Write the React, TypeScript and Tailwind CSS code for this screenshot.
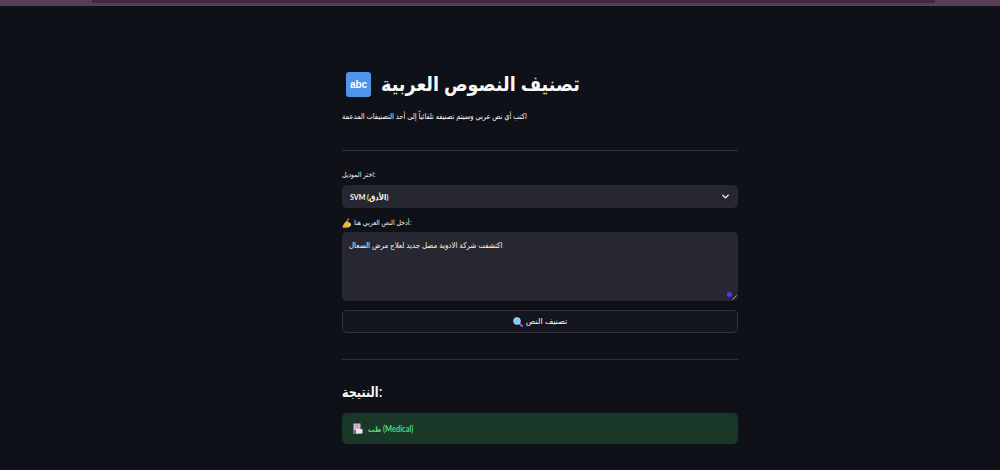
import React from 'react';
import { ChevronDown } from 'lucide-react';

const WritingHand = () => (
  <svg className="w-[10px] h-[10px] shrink-0" viewBox="0 0 10 10">
    <path d="M0.5 8.5 L2.5 5 L5 2.5 L6.5 4 L9 5.5 L8.5 8 L6 9.5 L1.5 9.5 Z" fill="#f4b13c" />
    <path d="M5 2.5 L7 0.5" stroke="#e2574c" strokeWidth="1.4" />
    <path d="M0.5 9.4 L5 9.4" stroke="#e8702a" strokeWidth="1.1" />
    <path d="M6 9 L9 6.5" stroke="#fbe3a6" strokeWidth="1" />
  </svg>
);

const Magnifier = () => (
  <svg className="w-[10px] h-[10px] shrink-0" viewBox="0 0 10 10">
    <path d="M6 6 L9 9" stroke="#b455b8" strokeWidth="2" strokeLinecap="round" />
    <circle cx="4" cy="4" r="3.4" fill="#6fd3f8" stroke="#c8d4dc" strokeWidth="0.8" />
  </svg>
);

const Hospital = () => (
  <svg className="w-[10px] h-[11px] shrink-0" viewBox="0 0 10 11">
    <rect x="0.5" y="0.5" width="7" height="10" fill="#c9c2d6" />
    <rect x="2" y="1.5" width="4" height="3.5" fill="#e88fc8" />
    <rect x="3" y="6" width="6.5" height="4.5" fill="#ece6f0" />
    <rect x="0.5" y="7" width="2.5" height="3.5" fill="#75668a" />
  </svg>
);

export default function App() {
  return (
    <div className="h-[470px] overflow-hidden bg-[#0e1117] text-[#fafafa] font-['Liberation_Sans','DejaVu_Sans',sans-serif]">
      {/* browser chrome strip */}
      <div className="h-[6px] bg-[#5a3c57]">
        <div className="ml-[92px] mr-[65px] h-[3px] bg-[#40283f]" />
      </div>

      <main className="ml-[342px] w-[396px]">
        <div className="mt-[60px] flex h-[36px] items-center gap-[10px] pl-[4px]">
          <div className="flex h-[25px] w-[25px] shrink-0 items-center justify-center rounded-[3px] bg-[#4f94ea] text-[10px] font-bold text-white">abc</div>
          <h1 className="origin-left scale-x-[0.88] whitespace-nowrap text-[20px] font-bold leading-[36px]">تصنيف النصوص العربية</h1>
        </div>
        <p className="mt-[5px] origin-left scale-x-[0.835] whitespace-nowrap text-[8px] leading-[20px]">اكتب أي نص عربي وسيتم تصنيفه تلقائياً إلى أحد التصنيفات المدعمة</p>

        <hr className="mt-[23px] border-t border-[#2e3038]" />

        <div className="mt-[18px] origin-left scale-x-[0.88] text-[7px] leading-[12px]">اختر الموديل:</div>
        <div className="mt-[4px] flex h-[23px] items-center justify-between rounded-[5px] bg-[#262730] pl-[8px] pr-[7px] font-['Lato','DejaVu_Sans',sans-serif] text-[8px] font-bold">
          <span className="origin-left scale-x-[0.88] whitespace-nowrap">SVM (الأدق)</span>
          <ChevronDown className="h-[11px] w-[11px]" strokeWidth={3} />
        </div>

        <div className="mt-[9px] flex h-[12px] items-center gap-[2px] text-[7px] leading-[12px]">
          <WritingHand />
          <span className="origin-left scale-x-[0.89] whitespace-nowrap">أدخل النص العربي هنا:</span>
        </div>
        <div className="relative mt-[3px] h-[69px] rounded-[5px] bg-[#262730] px-[7px] pt-[7px] text-[8px] leading-[14px]">
          <span className="block origin-left scale-x-[0.88] whitespace-nowrap">اكتشفت شركة الادوية مصل جديد لعلاج مرض السعال</span>
          <span className="absolute bottom-[4px] right-[6px] h-[5px] w-[5px] rounded-full bg-[#6a2cf0]" />
          <svg className="absolute bottom-[1px] right-[1px] h-[5px] w-[5px]" viewBox="0 0 5 5">
            <path d="M0.5 4.5 L4.5 0.5" stroke="#9a9aa2" strokeWidth="1" />
          </svg>
        </div>

        <button className="mt-[9px] flex h-[23px] w-full items-center justify-center gap-[3px] rounded-[5px] border border-[#31333c] bg-[#13161e] text-[8px]">
          <Magnifier />
          <span>تصنيف النص</span>
        </button>

        <hr className="mt-[26px] border-t border-[#2e3038]" />

        <h2 className="mt-[20px] origin-left scale-x-[0.8] text-[14px] font-bold leading-[24px]">النتيجة:</h2>

        <div className="mt-[9px] flex h-[31px] items-center gap-[5px] rounded-[5px] bg-[#193828] px-[11px] font-['Lato','DejaVu_Sans',sans-serif] text-[9px] font-bold text-[#4fd97f]">
          <Hospital />
          <span className="origin-left scale-x-[0.83] whitespace-nowrap"><span className="text-[8px]">طب </span>(Medical)</span>
        </div>
      </main>
    </div>
  );
}
